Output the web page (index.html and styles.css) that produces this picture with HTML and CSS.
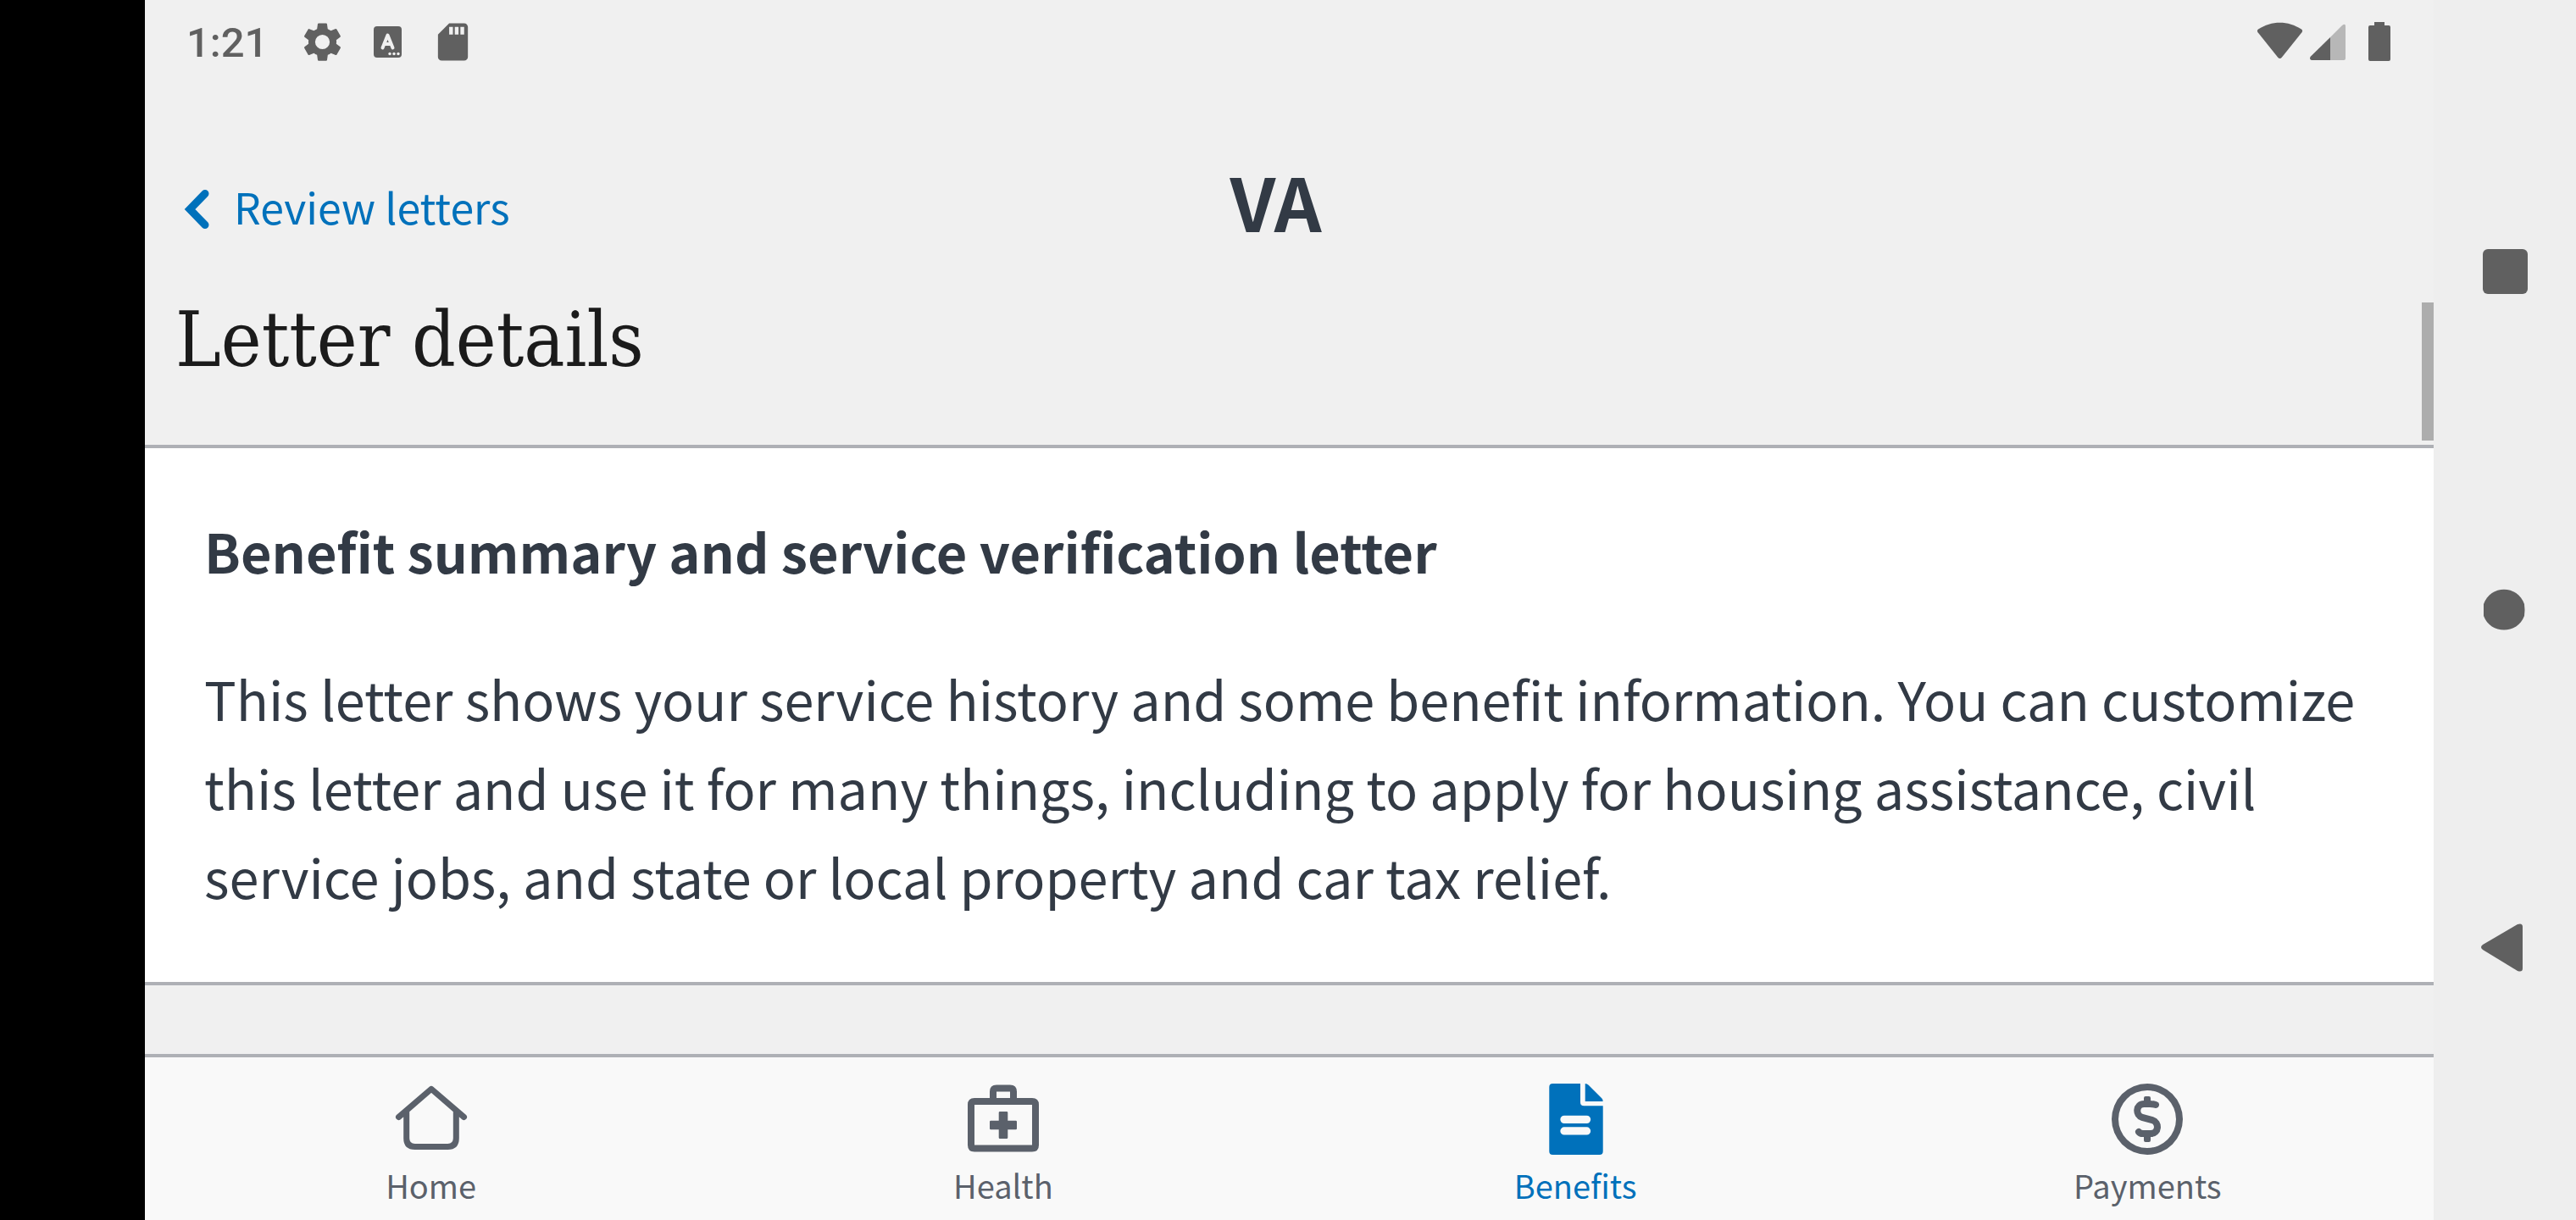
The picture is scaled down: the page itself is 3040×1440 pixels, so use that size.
FILE: index.html
```html
<!DOCTYPE html>
<html lang="en">
<head>
<meta charset="utf-8">
<title>Letter details</title>
<meta name="viewport" content="width=device-width, initial-scale=1">
<link rel="stylesheet" href="styles.css">
</head>
<body>
<div class="device">
  <div class="cutout"></div>

  <div class="app">
    <div class="status">
      <div class="status-left">
        <span class="clock">1:21</span>
        <svg class="status-icon" viewBox="0 0 24 24" aria-hidden="true"><path d="M19.4 13c0-.3.1-.6.1-1s0-.7-.1-1l2.100-1.650c.2-.15.250-.4.120-.640l-2-3.460c-.12-.22-.4-.3-.6-.22l-2.490 1c-.52-.4-1.080-.73-1.690-.98l-.38-2.650A.5.5 0 0 0 14 2h-4c-.25 0-.46.18-.5.420l-.37 2.650c-.61.250-1.170.590-1.690.980l-2.490-1c-.23-.09-.49 0-.61.220l-2 3.460c-.13.220-.07.490.12.640L4.570 11a8 8 0 0 0 0 2l-2.110 1.650c-.19.150-.24.420-.12.640l2 3.460c.12.220.39.3.61.220l2.490-1c.52.4 1.080.730 1.690.980l.37 2.650c.04.240.25.420.5.420h4c.25 0 .46-.18.490-.42l.38-2.650c.61-.25 1.170-.59 1.690-.98l2.490 1c.23.090.49 0 .61-.22l2-3.460c.12-.22.07-.49-.12-.64zM12 15.900a3.900 3.900 0 1 1 0-7.800 3.900 3.900 0 0 1 0 7.800z"/></svg>
        <svg class="status-icon" viewBox="0 0 53 53" aria-hidden="true"><path fill-rule="evenodd" d="M14 8h25q4 0 4 4v29q0 4-4 4H14q-4 0-4-4V12q0-4 4-4z"/><path class="cut-line" d="M20.500 33.500 26.500 18.500 32.500 33.500M22.500 29h8"/><circle class="cut" cx="29" cy="40.500" r="1.700"/><circle class="cut" cx="34" cy="40.500" r="1.700"/><circle class="cut" cx="39" cy="40.500" r="1.700"/></svg>
        <svg class="status-icon" viewBox="0 0 24 24" aria-hidden="true"><path d="M18 2h-8L4.020 8 4 20c0 1.100.9 2 2 2h12c1.100 0 2-.9 2-2V4c0-1.100-.9-2-2-2zm-6 6h-2V4h2v4zm3 0h-2V4h2v4zm3 0h-2V4h2v4z"/></svg>
      </div>
      <div class="status-right">
        <svg class="wifi" viewBox="0 0 53 46" aria-hidden="true"><path d="M1 8.500C17-2 36-2 52 8.500q2 1.500.4 3.700L29 41.500q-2.500 3-5 0L.6 12.200Q-1 10 1 8.500z"/></svg>
        <svg class="signal" viewBox="0 0 42 46" aria-hidden="true"><path class="faint" d="M24 18 38 4q4-3 4 1v38q0 2-2 2H24z"/><path d="M24 18v27H2q-3-1-1.500-4z"/></svg>
        <svg class="battery" viewBox="0 0 26 46" aria-hidden="true"><path d="M7 0h12v4h5q2 0 2 2v38q0 2-2 2H2q-2 0-2-2V6q0-2 2-2h5z"/></svg>
      </div>
    </div>

    <header class="topbar">
      <a class="back" href="#letters">
        <svg class="chevron" viewBox="0 0 28 46" aria-hidden="true"><path d="M24 4.500 6 23 24 41.500"/></svg>
        <span>Review letters</span>
      </a>
      <span class="logo">VA</span>
    </header>

    <main class="content">
      <h1 class="page-title">Letter details</h1>
      <section class="card">
        <h2 class="card-title">Benefit summary and service verification letter</h2>
        <p class="card-text">This letter shows your service history and some benefit information. You can customize this letter and use it for many things, including to apply for housing assistance, civil service jobs, and state or local property and car tax relief.</p>
      </section>
      <div class="scroll-thumb"></div>
    </main>

    <nav class="tabs">
      <a class="tab" href="#home">
        <svg class="tab-icon" viewBox="0 0 84 84" aria-hidden="true"><path class="line" d="M3.500 39.500 42 6.300 80.500 39.500M12.700 33v31.500q0 10 10 10h38.600q10 0 10-10V33"/></svg>
        <span>Home</span>
      </a>
      <a class="tab" href="#health">
        <svg class="tab-icon" viewBox="0 0 84 84" aria-hidden="true"><path fill-rule="evenodd" d="M8 17h18V9.500q0-8 8-8h16q8 0 8 8V17h18q8 0 8 8v47.500q0 8-8 8H8q-8 0-8-8V25q0-8 8-8zM34 9.500V17h16V9.500zM8 25v47.500h68V25z"/><path d="M38 33h8q1.300 0 1.300 1.300v9.400h9.400q1.300 0 1.300 1.300v8q0 1.300-1.300 1.300h-9.400v9.400q0 1.300-1.300 1.300h-8q-1.300 0-1.300-1.300v-9.400h-9.400q-1.300 0-1.300-1.300v-8q0-1.300 1.300-1.300h9.400v-9.400q0-1.300 1.300-1.300z"/></svg>
        <span>Health</span>
      </a>
      <a class="tab tab-active" href="#benefits" aria-current="page">
        <svg class="tab-icon" viewBox="0 0 84 84" aria-hidden="true"><path fill-rule="evenodd" d="M15.300 0H48v22q0 4.300 4.300 4.300h22.400V80q0 4-4 4H15.300q-4 0-4-4V4q0-4 4-4zM29 37.700a4.600 4.600 0 0 0 0 9.300h26.500a4.600 4.600 0 0 0 0-9.300zM29 51.300a4.600 4.600 0 0 0 0 9.300h26.500a4.600 4.600 0 0 0 0-9.300z"/><path d="M53.700 0q2.300 0 4 1.700l15.300 15.300q1.700 1.700 1.700 4h-21z"/></svg>
        <span>Benefits</span>
      </a>
      <a class="tab" href="#payments">
        <svg class="tab-icon" viewBox="0 0 84 84" aria-hidden="true"><path fill-rule="evenodd" d="M42 0a42 42 0 1 1 0 84 42 42 0 0 1 0-84zm0 8a34 34 0 1 0 0 68 34 34 0 0 0 0-68z"/><path class="dollar" d="M52 25Q48 23.800 44 24H38.500C28 24 28 37.500 36 39.800L48 43.200C56.500 45.700 56 59 46 59H37Q33.500 59 32 57"/><path d="M40 15h4q2 0 2 2v6h-8v-6q0-2 2-2zM38 61h8v6q0 2-2 2h-4q-2 0-2-2z"/></svg>
        <span>Payments</span>
      </a>
    </nav>
  </div>

  <div class="system-nav">
    <button class="nav-button" type="button" aria-label="Overview"><svg class="nav-icon" viewBox="0 0 56 56"><rect x="2" y="1" width="53" height="53" rx="6"/></svg></button>
    <button class="nav-button" type="button" aria-label="Home screen"><svg class="nav-icon" viewBox="0 0 56 56"><path d="M3 21C11-2 43-2 51 21q1 7 0 14C43 57 11 57 3 35z"/></svg></button>
    <button class="nav-button" type="button" aria-label="Back"><svg class="nav-icon" viewBox="0 0 56 56"><path d="M2 24 43 0q6-2 6 3v49q0 5-6 3L2 30q-4-3 0-6z"/></svg></button>
  </div>
</div>
</body>
</html>
```
FILE: styles.css
```css
* {
  box-sizing: border-box;
}

body {
  margin: 0;
  background: #f0f0f0;
  color: #323a45;
  font-family: "Noto Sans CJK SC", "Noto Sans", sans-serif;
}

h1, h2, p {
  margin: 0;
}

a {
  color: inherit;
  text-decoration: none;
}

svg {
  display: block;
  flex: none;
  fill: currentColor;
  overflow: visible;
}

.device {
  display: grid;
  grid-template-columns: 171px minmax(0, 1fr) 168px;
  min-height: 100vh;
}

.cutout {
  background: #000;
}

.app {
  display: flex;
  flex-direction: column;
}

/* Status bar */
.status {
  display: flex;
  justify-content: space-between;
  align-items: center;
  height: 98px;
  padding: 0 51px 0 49px;
  color: #606060;
}

.status-left {
  display: flex;
  align-items: center;
  gap: 24px;
}

.clock {
  margin-right: 14px;
  padding-top: 3px;
  font: 500 49px/56px Roboto, sans-serif;
}

.status-icon {
  width: 53px;
  height: 53px;
}

.cut {
  fill: #f0f0f0;
}

.cut-line {
  fill: none;
  stroke: #f0f0f0;
  stroke-width: 4;
  stroke-linecap: round;
  stroke-linejoin: round;
}

.status-right {
  display: flex;
  align-items: center;
}

.wifi {
  width: 53px;
  height: 46px;
}

.signal {
  width: 42px;
  height: 46px;
  margin: 0 27px 0 9px;
}

.faint {
  fill: #b7b7b7;
}

.battery {
  width: 26px;
  height: 46px;
}

/* Top bar */
.topbar {
  display: grid;
  grid-template-columns: 1fr auto 1fr;
  align-items: center;
  height: 259px;
  padding: 16px 79px 0 47px;
}

.back {
  display: flex;
  align-items: center;
  gap: 30px;
  padding-top: 14px;
  color: #0071bb;
  font-size: 50px;
  line-height: 70px;
}

.chevron {
  width: 28px;
  height: 46px;
  margin-top: 8px;
  fill: none;
  stroke: currentColor;
  stroke-width: 9;
  stroke-linecap: round;
}

.logo {
  font-size: 87px;
  font-weight: 700;
  line-height: 88px;
}

/* Scrolling content */
.content {
  position: relative;
  flex: 1;
}

.page-title {
  padding: 0 36px 80px;
  color: #1b1b1b;
  font: 400 90px/88px "DejaVu Serif Condensed", "DejaVu Serif", serif;
}

.card {
  padding: 68px 70px 73px;
  border-top: 4px solid #aeb0b5;
  border-bottom: 4px solid #aeb0b5;
  background: #fff;
  font-size: 63px;
  line-height: 105px;
}

.card-title {
  margin-bottom: 69px;
  font-size: inherit;
  font-weight: 700;
}

.scroll-thumb {
  position: absolute;
  top: 0;
  right: 0;
  width: 14px;
  height: 163px;
  background: #adadad;
}

/* Bottom tabs */
.tabs {
  display: grid;
  grid-template-columns: repeat(4, 1fr);
  padding: 31px 0 17px;
  border-top: 4px solid #aeb0b5;
  background: #f9f9f9;
  color: #5b616b;
}

.tab {
  display: flex;
  flex-direction: column;
  align-items: center;
  gap: 12px;
  font-size: 38px;
  line-height: 48px;
}

.tab-active {
  color: #0071bb;
}

.tab-icon {
  width: 84px;
  height: 84px;
}

.line {
  fill: none;
  stroke: currentColor;
  stroke-width: 7;
  stroke-linecap: round;
  stroke-linejoin: round;
}

.dollar {
  fill: none;
  stroke: currentColor;
  stroke-width: 8;
  stroke-linecap: round;
}

/* Android navigation buttons */
.system-nav {
  display: flex;
  flex-direction: column;
  align-items: center;
  justify-content: center;
  gap: 231px;
  background: #eee;
}

.nav-button {
  display: grid;
  place-items: center;
  width: 168px;
  height: 168px;
  padding: 0;
  border: 0;
  background: none;
  color: #606060;
}

.nav-icon {
  width: 56px;
  height: 56px;
}
```
